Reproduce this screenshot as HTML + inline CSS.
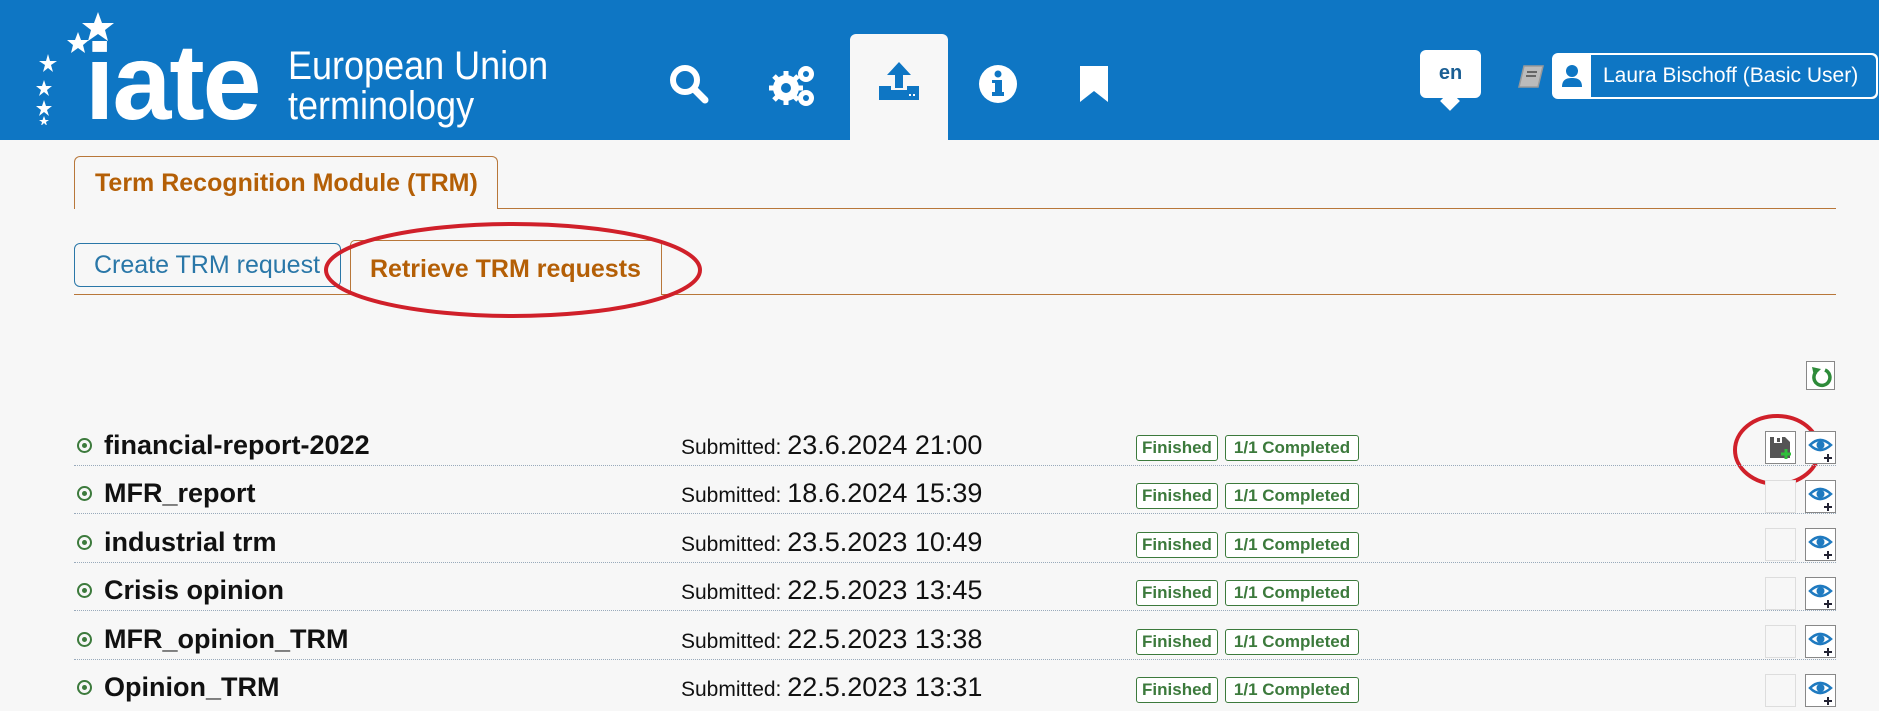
<!DOCTYPE html>
<html><head><meta charset="utf-8"><style>
*{margin:0;padding:0;box-sizing:border-box}
body{width:1879px;height:708px;background:#f7f7f7;font-family:"Liberation Sans",sans-serif;position:relative;overflow:hidden}
.a{position:absolute}
.hdr{left:0;top:0;width:1879px;height:140px;background:#0e76c4}
.sq{transform-origin:left center;white-space:nowrap}
.name{left:104px;font-weight:bold;font-size:27px;color:#111;transform:scaleX(1.0)}
.sub{left:681px;font-size:21px;color:#111;transform:scaleX(1.0)}
.sub b{font-weight:normal;font-size:27px}
.bul{left:77px;width:15px;height:15px;border:2px solid #3c7a3c;border-radius:50%}
.bul:after{content:"";position:absolute;left:3px;top:3px;width:5px;height:5px;background:#3c7a3c;border-radius:50%}
.bdg{height:26px;border:1px solid #3c7a3c;border-radius:3px;color:#3c7a3c;font-weight:bold;font-size:17px;line-height:24px;text-align:center;background:#fff}
.line{left:74px;width:1762px;border-top:1px dotted #9ab}
.sv{left:1765px;width:31px;height:33px;border:1px solid #ddd;background:#f7f7f7}
.ey{left:1805px;width:31px;height:33px;border:1px solid #888;background:#fff}
</style></head><body>
<div class="a hdr"></div>
<svg class="a" style="left:30px;top:10px" width="100" height="115" viewBox="0 0 100 115">
<g fill="#fff">
<polygon points="68,2 72,13 84,13 75,20 78,31 68,24 58,31 61,20 52,13 64,13"/>
<polygon points="48,22 51,30 59,30 53,35 55,43 48,38 41,43 43,35 37,30 45,30"/>
<polygon points="18,44 20,51 27,51 21,55 23,62 18,58 13,62 15,55 9,51 16,51"/>
<polygon points="14,70 16,76 22,76 17,80 19,86 14,82 9,86 11,80 6,76 12,76"/>
<polygon points="14,90 16,96 22,96 17,100 19,106 14,102 9,106 11,100 6,96 12,96"/>
<polygon points="14,106 15.5,110 19,110 16,112 17,116 14,113 11,116 12,112 9,110 12.5,110"/>
</g></svg>
<div class="a sq" style="left:85px;top:22px;color:#fff;font-size:108px;font-weight:bold;line-height:120px;transform:scaleX(.98);letter-spacing:-2px">iate</div>
<div class="a sq" style="left:288px;top:46px;color:#fff;font-size:40px;line-height:40px;transform:scaleX(.9)">European Union<br>terminology</div>
<svg class="a" style="left:668px;top:63px" width="42" height="42" viewBox="0 0 42 42"><circle cx="17" cy="17" r="12" fill="none" stroke="#fff" stroke-width="6"/><line x1="26" y1="26" x2="37" y2="37" stroke="#fff" stroke-width="7" stroke-linecap="round"/></svg>
<svg class="a" style="left:768px;top:62px" width="52" height="46" viewBox="0 0 52 46"><g fill="#fff"><circle cx="18" cy="26" r="13"/><circle cx="38" cy="12" r="8"/><circle cx="38" cy="36" r="8"/></g><g fill="#0e76c4"><circle cx="38" cy="12" r="3"/><circle cx="38" cy="36" r="3"/></g><g stroke="#fff" stroke-width="5"><line x1="18" y1="9" x2="18" y2="43"/><line x1="1" y1="26" x2="35" y2="26"/><line x1="6" y1="14" x2="30" y2="38"/><line x1="30" y1="14" x2="6" y2="38"/></g><circle cx="18" cy="26" r="5" fill="#0e76c4"/></svg>
<div class="a" style="left:850px;top:34px;width:98px;height:106px;background:#f7f7f7;border-radius:6px 6px 0 0"></div>
<svg class="a" style="left:877px;top:60px" width="44" height="44" viewBox="0 0 44 44"><g fill="#0e76c4"><polygon points="22,2 34,15 26,15 26,28 18,28 18,15 10,15"/><path d="M2 26h12v4h16v-4h12v14H2z"/></g><rect x="32" y="34" width="2" height="2" fill="#fff"/><rect x="36" y="34" width="2" height="2" fill="#fff"/></svg>
<svg class="a" style="left:978px;top:64px" width="40" height="40" viewBox="0 0 40 40"><circle cx="20" cy="20" r="19" fill="#fff"/><rect x="17" y="16" width="7" height="15" fill="#0e76c4"/><rect x="14" y="28" width="12" height="4" fill="#0e76c4"/><rect x="14" y="16" width="5" height="3" fill="#0e76c4"/><circle cx="20" cy="10" r="3.5" fill="#0e76c4"/></svg>
<svg class="a" style="left:1078px;top:64px" width="32" height="40" viewBox="0 0 32 40"><path d="M2 2h28v36L16 27 2 38z" fill="#fff"/></svg>
<div class="a" style="left:1420px;top:50px;width:61px;height:48px;background:#fff;border-radius:6px;color:#1b5f94;font-weight:bold;font-size:20px;text-align:center;line-height:46px">en</div>
<div class="a" style="left:1443px;top:94px;width:14px;height:14px;background:#fff;transform:rotate(45deg)"></div>
<svg class="a" style="left:1517px;top:64px" width="28" height="26" viewBox="0 0 28 26"><path d="M7 2h19l-5 21H2z" fill="#bbb" stroke="#999" stroke-width="1.5"/><line x1="10" y1="8" x2="20" y2="8" stroke="#666" stroke-width="2"/><line x1="9" y1="12" x2="19" y2="12" stroke="#666" stroke-width="2"/></svg>
<div class="a" style="left:1552px;top:53px;width:326px;height:46px;background:#fff;border-radius:6px"></div>
<div class="a" style="left:1591px;top:55px;width:285px;height:42px;background:#0e76c4;border-radius:0 5px 5px 0;color:#fff;font-size:21px;line-height:42px;padding-left:12px;white-space:nowrap">Laura Bischoff (Basic User)</div>
<svg class="a" style="left:1561px;top:64px" width="22" height="24" viewBox="0 0 22 24"><circle cx="11" cy="7" r="6" fill="#0e76c4"/><path d="M1 23c0-7 4-9 10-9s10 2 10 9z" fill="#0e76c4"/></svg>
<div class="a" style="left:74px;top:208px;width:1762px;border-top:1px solid #b8773a"></div>
<div class="a" style="left:74px;top:156px;width:424px;height:53px;border:1px solid #b8773a;border-bottom:none;border-radius:6px 6px 0 0;background:#f7f7f7;color:#b45f06;font-weight:bold;font-size:25px;line-height:52px;padding-left:20px;white-space:nowrap">Term Recognition Module (TRM)</div>
<div class="a" style="left:74px;top:294px;width:1762px;border-top:1px solid #b8773a"></div>
<div class="a" style="left:74px;top:243px;width:267px;height:44px;border:1px solid #2a77a8;border-radius:6px;color:#2a77a8;font-size:25px;line-height:42px;padding-left:19px;white-space:nowrap">Create TRM request</div>
<div class="a" style="left:350px;top:240px;width:312px;height:55px;border:1px solid #b8773a;border-bottom:none;border-radius:5px 5px 0 0;background:#f7f7f7;color:#b45f06;font-weight:bold;font-size:25px;line-height:56px;padding-left:19px;white-space:nowrap">Retrieve TRM requests</div>
<svg class="a" style="left:0;top:0" width="1879" height="708"><ellipse cx="513" cy="270" rx="187" ry="46" fill="none" stroke="#d0202a" stroke-width="4"/><ellipse cx="1777" cy="450" rx="42" ry="34" fill="none" stroke="#d0202a" stroke-width="4"/></svg>
<div class="a" style="left:1806px;top:361px;width:29px;height:29px;border:1px solid #888;background:#fff"></div>
<svg class="a" style="left:1810px;top:364px" width="22" height="24" viewBox="0 0 22 24"><path d="M6 8A8 8 0 1 0 15 6" fill="none" stroke="#2e8b3a" stroke-width="3.5"/><polygon points="2,3 11,5 4,12" fill="#2e8b3a"/></svg>

<div class="a bul" style="top:438px"></div><div class="a sq name" style="top:430px">financial-report-2022</div><div class="a sq sub" style="top:430px">Submitted: <b>23.6.2024 21:00</b></div>
<div class="a bul" style="top:486px"></div><div class="a sq name" style="top:478px">MFR_report</div><div class="a sq sub" style="top:478px">Submitted: <b>18.6.2024 15:39</b></div>
<div class="a bul" style="top:535px"></div><div class="a sq name" style="top:527px">industrial trm</div><div class="a sq sub" style="top:527px">Submitted: <b>23.5.2023 10:49</b></div>
<div class="a bul" style="top:583px"></div><div class="a sq name" style="top:575px">Crisis opinion</div><div class="a sq sub" style="top:575px">Submitted: <b>22.5.2023 13:45</b></div>
<div class="a bul" style="top:632px"></div><div class="a sq name" style="top:624px">MFR_opinion_TRM</div><div class="a sq sub" style="top:624px">Submitted: <b>22.5.2023 13:38</b></div>
<div class="a bul" style="top:680px"></div><div class="a sq name" style="top:672px">Opinion_TRM</div><div class="a sq sub" style="top:672px">Submitted: <b>22.5.2023 13:31</b></div>

<div class="a line" style="top:465px"></div><div class="a line" style="top:513px"></div><div class="a line" style="top:562px"></div><div class="a line" style="top:610px"></div><div class="a line" style="top:659px"></div>

<div class="a bdg" style="left:1136px;top:435px;width:82px">Finished</div><div class="a bdg" style="left:1225px;top:435px;width:134px">1/1 Completed</div>
<div class="a bdg" style="left:1136px;top:483px;width:82px">Finished</div><div class="a bdg" style="left:1225px;top:483px;width:134px">1/1 Completed</div>
<div class="a bdg" style="left:1136px;top:532px;width:82px">Finished</div><div class="a bdg" style="left:1225px;top:532px;width:134px">1/1 Completed</div>
<div class="a bdg" style="left:1136px;top:580px;width:82px">Finished</div><div class="a bdg" style="left:1225px;top:580px;width:134px">1/1 Completed</div>
<div class="a bdg" style="left:1136px;top:629px;width:82px">Finished</div><div class="a bdg" style="left:1225px;top:629px;width:134px">1/1 Completed</div>
<div class="a bdg" style="left:1136px;top:677px;width:82px">Finished</div><div class="a bdg" style="left:1225px;top:677px;width:134px">1/1 Completed</div>

<div class="a sv" style="top:431px;border-color:#888;background:#fff"><svg width="29" height="31" viewBox="0 0 29 31"><path d="M4 5h15l5 5v16H4z" fill="#555"/><rect x="8" y="5" width="8" height="6" fill="#fff"/><rect x="11" y="6" width="3" height="4" fill="#555"/><path d="M20 17v10M15 22h10" stroke="#2fbf3a" stroke-width="3"/></svg></div>
<div class="a sv" style="top:480px"></div><div class="a sv" style="top:528px"></div><div class="a sv" style="top:577px"></div><div class="a sv" style="top:625px"></div><div class="a sv" style="top:674px"></div>

<svg width="0" height="0" style="position:absolute"><defs><g id="eye"><path d="M4 13Q14 3 25 13Q14 23 4 13z" fill="none" stroke="#1f7ac0" stroke-width="2.5"/><circle cx="14.5" cy="13" r="4" fill="#1f7ac0"/><path d="M22 22v8M18 26h8" stroke="#223" stroke-width="2"/></g></defs></svg>
<div class="a ey" style="top:431px"><svg width="29" height="31"><use href="#eye"/></svg></div>
<div class="a ey" style="top:480px"><svg width="29" height="31"><use href="#eye"/></svg></div>
<div class="a ey" style="top:528px"><svg width="29" height="31"><use href="#eye"/></svg></div>
<div class="a ey" style="top:577px"><svg width="29" height="31"><use href="#eye"/></svg></div>
<div class="a ey" style="top:625px"><svg width="29" height="31"><use href="#eye"/></svg></div>
<div class="a ey" style="top:674px"><svg width="29" height="31"><use href="#eye"/></svg></div>
</body></html>
